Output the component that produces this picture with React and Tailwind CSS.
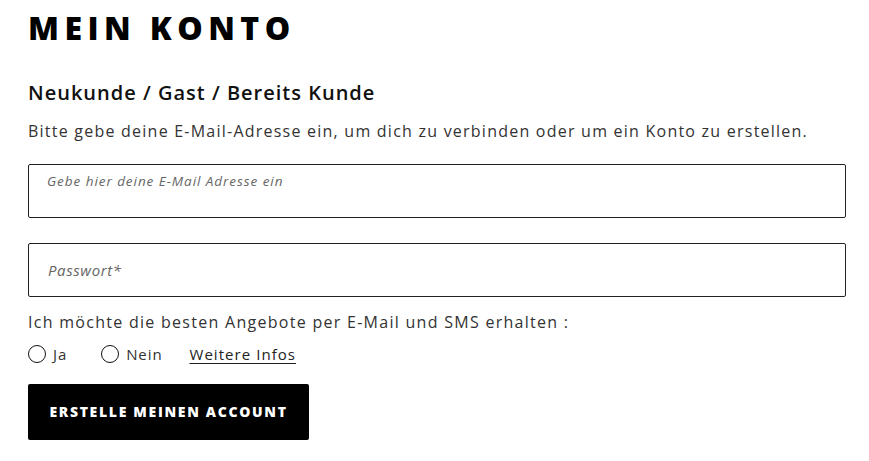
import { useState } from 'react';

function Radio({ label, checked, onChange }) {
  return (
    <label className="flex items-center gap-[7px] cursor-pointer">
      <span
        onClick={onChange}
        className="flex h-[18px] w-[18px] items-center justify-center rounded-full border border-[#111]"
      >
        {checked && <span className="h-[10px] w-[10px] rounded-full bg-black" />}
      </span>
      <span className="text-[15px] tracking-[0.06em] text-[#333]">{label}</span>
    </label>
  );
}

export default function App() {
  const [optIn, setOptIn] = useState(null);

  return (
    <div className="min-h-screen bg-white px-[28px] pt-[10px] font-['Open_Sans',sans-serif] text-[#111]">
      <h1 className="text-[32px] font-extrabold leading-[36px] tracking-[0.17em] text-black">
        MEIN KONTO
      </h1>

      <h2 className="mt-[34px] text-[20px] font-semibold leading-[26px] tracking-[0.05em] text-[#111]">
        Neukunde / Gast / Bereits Kunde
      </h2>

      <p className="mt-[14px] text-[16px] leading-[22px] tracking-[0.077em] text-[#333]">
        Bitte gebe deine E-Mail-Adresse ein, um dich zu verbinden oder um ein Konto zu erstellen.
      </p>

      <div className="mt-[22px] w-[818px]">
        <div className="h-[54px] rounded-[2px] border border-[#222] px-[18px] pt-[3px]">
          <input
            type="email"
            placeholder="Gebe hier deine E-Mail Adresse ein"
            className="w-full bg-transparent text-[13.5px] italic tracking-[0.07em] outline-none placeholder:text-[#666]"
          />
        </div>

        <div className="mt-[25px] flex h-[54px] items-center rounded-[2px] border border-[#222] px-[19px]">
          <input
            type="password"
            placeholder="Passwort*"
            className="w-full bg-transparent text-[15px] italic tracking-[0.04em] outline-none placeholder:text-[#666]"
          />
        </div>
      </div>

      <p className="mt-[14px] text-[16px] leading-[22px] tracking-[0.08em] text-[#333]">
        Ich möchte die besten Angebote per E-Mail und SMS erhalten :
      </p>

      <div className="mt-[10px] flex items-center">
        <Radio label="Ja" checked={optIn === 'ja'} onChange={() => setOptIn('ja')} />
        <div className="ml-[34px]">
          <Radio label="Nein" checked={optIn === 'nein'} onChange={() => setOptIn('nein')} />
        </div>
        <a href="#" className="ml-[27px] text-[15px] font-medium tracking-[0.07em] text-[#222] underline underline-offset-[3px]">
          Weitere Infos
        </a>
      </div>

      <button
        type="button"
        className="mt-[18px] flex h-[56px] w-[281px] items-center justify-center rounded-[2px] bg-black text-[14px] font-extrabold tracking-[0.12em] text-white"
      >
        ERSTELLE MEINEN ACCOUNT
      </button>
    </div>
  );
}
